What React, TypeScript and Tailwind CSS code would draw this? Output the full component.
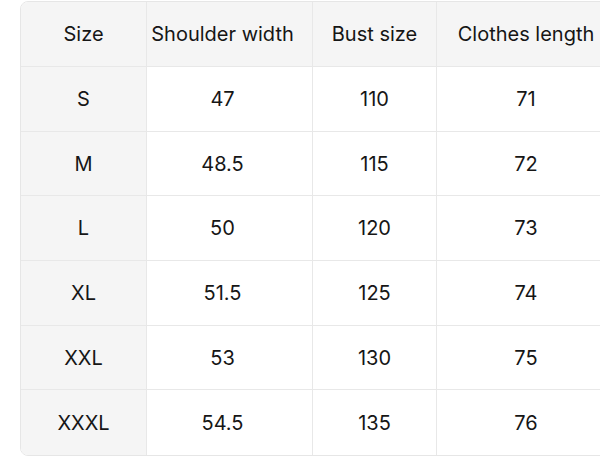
const headers = ["Size", "Shoulder width", "Bust size", "Clothes length"];

const rows = [
  ["S", "47", "110", "71"],
  ["M", "48.5", "115", "72"],
  ["L", "50", "120", "73"],
  ["XL", "51.5", "125", "74"],
  ["XXL", "53", "130", "75"],
  ["XXXL", "54.5", "135", "76"],
];

export default function App() {
  return (
    <main
      className="bg-white w-[600px] h-[456px] overflow-hidden pl-[20px] pt-[1px]"
      style={{ fontFamily: "Inter, 'Noto Sans', sans-serif" }}
    >
      <div className="w-[596px] border border-[#e6e6e6] rounded-[8px] overflow-hidden text-[#161616] text-[20px]">
        <div className="grid grid-cols-[126px_166px_124px_178px]">
          {headers.map((h, i) => (
            <div
              key={h}
              className={`h-[65px] flex items-center justify-center bg-[#f5f5f5] border-b border-[#e8e8e8] ${
                i < headers.length - 1 ? "border-r" : ""
              } ${i === 1 ? "pr-[14px]" : ""}`}
            >
              {h}
            </div>
          ))}
          {rows.map((row, r) =>
            row.map((cell, c) => (
              <div
                key={`${r}-${c}`}
                className={`h-[64.7px] flex items-center justify-center border-[#e8e8e8] ${
                  c === 0 ? "bg-[#f5f5f5]" : "bg-white"
                } ${c < row.length - 1 ? "border-r" : ""} ${
                  r < rows.length - 1 ? "border-b" : ""
                } ${c === 1 ? "pr-[14px]" : ""}`}
              >
                {cell}
              </div>
            ))
          )}
        </div>
      </div>
    </main>
  );
}
